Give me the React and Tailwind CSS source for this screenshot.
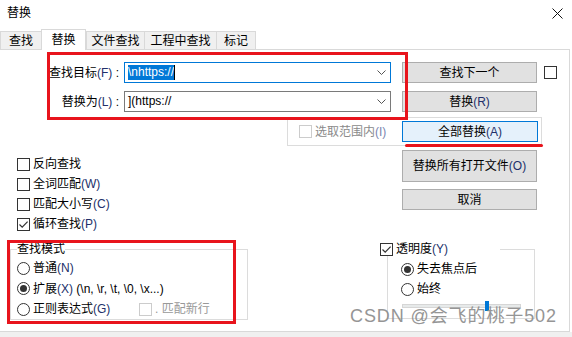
import React from "react";

const Check = ({ checked, disabled }) => (
  <span
    className={
      disabled
        ? "w-[13px] h-[13px] border border-[#cccccc] bg-white flex items-center justify-center shrink-0"
        : "w-[13px] h-[13px] border border-[#333333] bg-white flex items-center justify-center shrink-0"
    }
  >
    {checked && (
      <svg width="11" height="11" viewBox="0 0 11 11">
        <path d="M1.5 5.5 L4.2 8.2 L9.6 2.6" stroke="#333333" strokeWidth="1.2" fill="none" />
      </svg>
    )}
  </span>
);

const Radio = ({ checked }) => (
  <span className="w-[13px] h-[13px] rounded-full border border-[#333333] bg-white flex items-center justify-center shrink-0">
    {checked && <span className="w-[7px] h-[7px] rounded-full bg-[#333333]" />}
  </span>
);

const M = ({ children }) => <span className="text-[#22306a]">{children}</span>;

const Btn = ({ children, className }) => (
  <div
    className={
      "w-[135px] flex items-center justify-center border border-[#adadad] bg-[#e1e1e1] text-[12px] leading-[14px] text-black " +
      (className || "")
    }
  >
    {children}
  </div>
);

const Chevron = () => (
  <svg width="9" height="5" viewBox="0 0 9 5" className="shrink-0">
    <path d="M0.5 0.5 L4.5 4.5 L8.5 0.5" stroke="#555555" strokeWidth="1" fill="none" />
  </svg>
);

const Tab = ({ children, w, active }) =>
  active ? (
    <div
      className={
        w +
        " h-[21px] -mb-px bg-white border-t border-l border-r border-[#d9d9d9] flex items-center justify-center relative z-10"
      }
    >
      {children}
    </div>
  ) : (
    <div className={w + " h-[18px] bg-[#f0f0f0] border-t border-l border-[#d9d9d9] flex items-center justify-center"}>
      {children}
    </div>
  );

export default function App() {
  return (
    <div className="w-[572px] h-[337px] bg-white relative overflow-hidden flex flex-col text-[12px] leading-[14px] text-black font-['Liberation_Sans','Noto_Sans_CJK_SC',sans-serif]">
      {/* title bar */}
      <div className="h-[29px] shrink-0 flex items-start justify-between">
        <div className="pl-[7px] pt-[6px] text-[12px] leading-[14px]">替换</div>
        <svg width="11" height="11" viewBox="0 0 11 11" className="mt-[8px] mr-[9px]">
          <path d="M0.5 0.5 L10.5 10.5 M10.5 0.5 L0.5 10.5" stroke="#111111" strokeWidth="1" />
        </svg>
      </div>

      {/* tabs */}
      <div className="h-[20px] shrink-0 flex items-end">
        <Tab w="w-[41px]">查找</Tab>
        <Tab w="w-[45px]" active>
          替换
        </Tab>
        <Tab w="w-[58px]">文件查找</Tab>
        <Tab w="w-[72px]">工程中查找</Tab>
        <div className="w-[40px] h-[18px] bg-[#f0f0f0] border-t border-l border-r border-[#d9d9d9] flex items-center justify-center">
          标记
        </div>
      </div>

      {/* panel */}
      <div className="w-[570px] h-[283px] shrink-0 border-t border-r border-b border-[#d9d9d9] flex flex-col">
        {/* row 1 */}
        <div className="mt-[12px] h-[21px] flex items-center">
          <div className="w-[119px] text-right whitespace-nowrap">
            查找目标<M>(F)</M> :
          </div>
          <div className="ml-[5px] w-[267px] h-[21px] border border-[#0078d7] bg-white flex items-center pl-[3px] pr-[4px]">
            <span className="bg-[#0078d7] text-white h-[15px] leading-[15px]">\nhttps://</span>
            <span className="w-px h-[15px] bg-black" />
            <span className="flex-1" />
            <Chevron />
          </div>
          <Btn className="ml-[11px] h-[21px]">查找下一个</Btn>
          <div className="ml-[7px]">
            <Check />
          </div>
        </div>

        {/* row 2 */}
        <div className="mt-[8px] h-[21px] flex items-center">
          <div className="w-[119px] text-right whitespace-nowrap">
            替换为<M>(L)</M> :
          </div>
          <div className="ml-[5px] w-[267px] h-[21px] border border-[#7a7a7a] bg-white flex items-center pl-[3px] pr-[4px]">
            <span className="leading-[15px]">](https://</span>
            <span className="flex-1" />
            <Chevron />
          </div>
          <Btn className="ml-[11px] h-[21px]">
            替换<M>(R)</M>
          </Btn>
        </div>

        {/* row 3: selection group */}
        <div className="mt-[5px] ml-[287px] w-[255px] h-[29px] border border-[#dcdcdc] flex items-center">
          <div className="w-[114px] flex items-center pl-[11px] text-[#8a8a8a] whitespace-nowrap">
            <Check disabled />
            <span className="ml-[3px]">
              选取范围内<span className="text-[#7a86b0]">(I)</span>
            </span>
          </div>
          <div className="w-[136px] h-[21px] border border-[#0078d7] bg-[#e5f1fb] flex items-center justify-center">
            全部替换<M>(A)</M>
          </div>
        </div>

        {/* middle */}
        <div className="flex">
          <div className="w-[402px] shrink-0 pt-[8px] pl-[17px] flex flex-col">
            <div className="h-[20px] flex items-center">
              <Check />
              <span className="ml-[3px]">反向查找</span>
            </div>
            <div className="h-[20px] flex items-center">
              <Check />
              <span className="ml-[3px]">
                全词匹配<M>(W)</M>
              </span>
            </div>
            <div className="h-[20px] flex items-center">
              <Check />
              <span className="ml-[3px]">
                匹配大小写<M>(C)</M>
              </span>
            </div>
            <div className="h-[20px] flex items-center">
              <Check checked />
              <span className="ml-[3px]">
                循环查找<M>(P)</M>
              </span>
            </div>
          </div>
          <div className="flex flex-col">
            <Btn className="mt-[4px] h-[32px]">
              替换所有打开文件<M>(O)</M>
            </Btn>
            <Btn className="mt-[7px] h-[21px]">取消</Btn>
          </div>
        </div>

        {/* bottom groups */}
        <div className="mt-[8px] flex items-start">
          <fieldset className="ml-[10px] w-[238px] border border-[#dcdcdc] pl-[6px]">
            <legend className="leading-[14px]">查找模式</legend>
            <div className="pt-[2px] flex flex-col">
              <div className="h-[20px] flex items-center">
                <Radio />
                <span className="ml-[3px]">
                  普通<M>(N)</M>
                </span>
              </div>
              <div className="h-[21px] flex items-center">
                <Radio checked />
                <span className="ml-[3px] whitespace-nowrap">
                  扩展<M>(X)</M> (\n, \r, \t, \0, \x...)
                </span>
              </div>
              <div className="h-[20px] flex items-center">
                <Radio />
                <span className="ml-[3px] w-[106px] whitespace-nowrap">
                  正则表达式<M>(G)</M>
                </span>
                <Check disabled />
                <span className="ml-[3px] text-[#999999] whitespace-nowrap">. 匹配新行</span>
              </div>
            </div>
          </fieldset>

          <fieldset className="ml-[139px] w-[148px] border border-[#dcdcdc]">
            <legend className="-ml-[8px] w-[120px] bg-white flex items-center leading-[14px]">
              <Check checked />
              <span className="ml-[3px]">
                透明度<M>(Y)</M>
              </span>
            </legend>
            <div className="pt-[3px] pl-[13px] pb-[10px] flex flex-col">
              <div className="h-[20px] flex items-center">
                <Radio checked />
                <span className="ml-[3px]">失去焦点后</span>
              </div>
              <div className="h-[20px] flex items-center">
                <Radio />
                <span className="ml-[3px]">始终</span>
              </div>
              <div className="mt-[5px] ml-px w-[119px] h-[4px] bg-[#e7eaea] border border-[#d6d6d6] relative">
                <span className="absolute left-[82px] -top-[4px] w-[4px] h-[10px] bg-[#0078d7]" />
              </div>
            </div>
          </fieldset>
        </div>
      </div>

      <div className="flex-1 bg-[#f0f0f0]" />

      {/* annotation overlays */}
      <div className="absolute left-[47px] top-[52px] w-[361px] h-[68px] border-[3px] border-[#e8141c] pointer-events-none" />
      <div className="absolute left-[405px] top-[144px] w-[138px] h-[3px] rounded-full bg-[#e8141c]" />
      <div className="absolute left-[7px] top-[240px] w-[229px] h-[84px] border-[3px] border-[#e8141c] pointer-events-none" />

      {/* watermark */}
      <div className="absolute left-[350px] top-[305px] text-[18px] leading-[22px] tracking-[0.9px] text-[#8a8a8a] opacity-90 whitespace-nowrap">
        CSDN @会飞的桃子502
      </div>
    </div>
  );
}
